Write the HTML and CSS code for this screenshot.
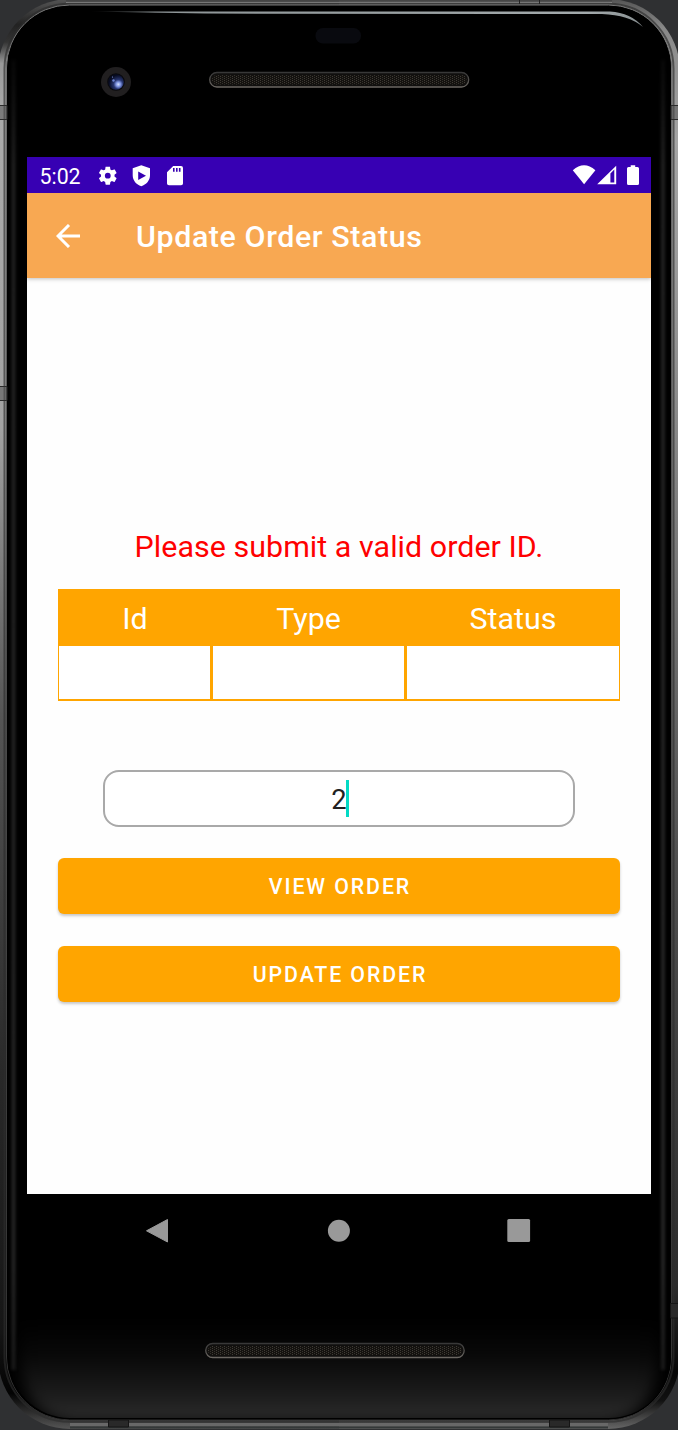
FILE: index.html
```html
<!DOCTYPE html>
<html lang="en">
<head>
<meta charset="utf-8">
<title>Update Order Status</title>
<link rel="stylesheet" href="styles.css">
</head>
<body>
<div class="phone">
  <svg class="shell" viewBox="0 0 678 1430" aria-hidden="true">
    <defs>
      <linearGradient id="rimL" x1="0" y1="0" x2="0" y2="1">
        <stop offset="0" stop-color="#555"/><stop offset=".018" stop-color="#222"/><stop offset=".03" stop-color="#333"/><stop offset=".045" stop-color="#999"/>
        <stop offset=".08" stop-color="#aaa"/><stop offset=".3" stop-color="#a2a2a2"/>
        <stop offset=".5" stop-color="#555"/><stop offset=".75" stop-color="#292929"/>
        <stop offset=".93" stop-color="#161616"/><stop offset=".975" stop-color="#030303"/><stop offset=".99" stop-color="#333"/><stop offset="1" stop-color="#555"/>
      </linearGradient>
      <linearGradient id="rimR" x1="0" y1="0" x2="0" y2="1">
        <stop offset="0" stop-color="#555"/><stop offset=".02" stop-color="#888"/>
        <stop offset=".1" stop-color="#a5a5a5"/><stop offset=".2" stop-color="#999"/>
        <stop offset=".4" stop-color="#777"/><stop offset=".6" stop-color="#505050"/>
        <stop offset=".9" stop-color="#2b2b2b"/><stop offset=".96" stop-color="#060606"/><stop offset=".98" stop-color="#111"/><stop offset="1" stop-color="#666"/>
      </linearGradient>
      <linearGradient id="edge" x1="0" y1="0" x2="0" y2="1">
        <stop offset="0" stop-color="#777"/><stop offset=".3" stop-color="#555"/><stop offset="1" stop-color="#303030"/>
      </linearGradient>
      <linearGradient id="chin" x1="0" y1="0" x2="0" y2="1">
        <stop offset="0" stop-color="#000"/><stop offset=".35" stop-color="#080808"/><stop offset=".8" stop-color="#1f1f1f"/><stop offset="1" stop-color="#303030"/>
      </linearGradient>
      <linearGradient id="side" gradientUnits="userSpaceOnUse" x1="0" y1="30" x2="0" y2="1400">
        <stop offset="0" stop-color="#000"/><stop offset=".1" stop-color="#202020"/><stop offset=".9" stop-color="#242424"/><stop offset="1" stop-color="#161616"/>
      </linearGradient>
      <linearGradient id="shine" x1="0" y1="0" x2="1" y2="0">
        <stop offset="0" stop-color="#8d9496" stop-opacity="0"/><stop offset=".12" stop-color="#8d9496"/>
        <stop offset=".9" stop-color="#a3aaac"/><stop offset="1" stop-color="#899092"/>
      </linearGradient>
      <linearGradient id="slotEdge" x1="0" y1="0" x2="0" y2="1">
        <stop offset="0" stop-color="#383838"/><stop offset="1" stop-color="#6b6762"/>
      </linearGradient>
      <radialGradient id="lens" cx=".65" cy=".65" r=".6">
        <stop offset="0" stop-color="#d4e2ff"/><stop offset=".25" stop-color="#7e93e0"/>
        <stop offset=".5" stop-color="#27356f"/><stop offset="1" stop-color="#070b20"/>
      </radialGradient>
      <pattern id="mesh" width="4" height="2" patternUnits="userSpaceOnUse">
        <rect width="4" height="2" fill="#14120f"/>
        <rect width="1" height="1" fill="#403c36"/><rect x="2" y="1" width="1" height="1" fill="#35322d"/>
      </pattern>
      <filter id="soft" color-interpolation-filters="sRGB" filterUnits="userSpaceOnUse" x="0" y="0" width="678" height="1430"><feGaussianBlur stdDeviation="1.500"/></filter>
      <filter id="wide" color-interpolation-filters="sRGB" filterUnits="userSpaceOnUse" x="-30" y="1250" width="740" height="220"><feGaussianBlur stdDeviation="7"/></filter>
      <clipPath id="glassClip"><rect x="8" y="6" width="663" height="1412" rx="62"/></clipPath>
      <clipPath id="halfL"><rect width="339" height="1430"/></clipPath>
      <clipPath id="halfR"><rect x="339" width="339" height="1430"/></clipPath>
    </defs>
    <rect width="678" height="1430" fill="#2f3032"/>
    <rect x="-2" y="-1" width="682" height="1430" rx="72" fill="url(#rimL)" clip-path="url(#halfL)"/>
    <rect x="-2" y="-1" width="682" height="1430" rx="72" fill="url(#rimR)" clip-path="url(#halfR)"/>
    <path d="M66 .8H612" stroke="#404040"/>
    <path d="M66 2.500H612" stroke="#858585"/>
    <path d="M70 1424.500H608" stroke="#686868" stroke-width="3"/>
    <path d="M70 1427.500H608" stroke="#343838" stroke-width="2"/>
    <rect x="4.500" y="3.800" width="669" height="1418" rx="65" fill="none" stroke="#2c2c2c" stroke-opacity=".65" stroke-width="2"/>
    <rect x="6.500" y="5" width="665" height="1415" rx="63" fill="#000" stroke="url(#edge)"/>
    <rect x="7.500" y="6" width="663.500" height="1413" rx="62" fill="#000"/>
    <g clip-path="url(#glassClip)">
      <path d="M20 1320H658V1360Q654 1422 600 1422H78Q24 1422 20 1360Z" fill="url(#chin)" filter="url(#wide)"/>
      <path d="M13.500 60V1370M663 60V1370" stroke="url(#side)" stroke-width="4" filter="url(#soft)"/>
    </g>
    <path d="M88 11.400H610Q631 12.500 643 27Q629 15 602 14L205 13.600Z" fill="url(#shine)"/>
    <g fill="#555" fill-opacity=".55" stroke="#2b2b2b">
      <path d="M-1 105.500H7V119.500H-1ZM671 105.500H679V119.500H671Z"/>
      <path d="M-1 386.500H7V400.500H-1Z"/>
    </g>
    <g fill="#292929" stroke="#151515">
      <path d="M108.500 1420V1427H128.500V1420ZM549.500 1420V1427H569.500V1420ZM670.500 1303.500H679V1318H670.500Z"/>
    </g>
    <path d="M519.500 0V4M539.500 0V4" stroke="#222"/>
    <rect x="315.500" y="28" width="45.500" height="15.500" rx="7.500" fill="#090a0f"/>
    <circle cx="116" cy="82" r="15" fill="#211f20"/>
    <circle cx="116" cy="82" r="8.800" fill="#09090c"/>
    <circle cx="116" cy="82" r="7.800" fill="url(#lens)"/>
    <circle cx="113.500" cy="80.500" r="1.200" fill="#6b82cf"/>
    <circle cx="112.500" cy="77" r=".6" fill="#8ba0e8"/>
    <rect x="209.700" y="72.500" width="259" height="14.500" rx="7.200" fill="#100f0e" stroke="url(#slotEdge)" stroke-width="1.300"/>
    <rect x="212" y="75" width="254.500" height="9.500" rx="4.700" fill="url(#mesh)"/>
    <rect x="205.700" y="1343.500" width="258.500" height="14" rx="7" fill="#100f0e" stroke="url(#slotEdge)" stroke-width="1.300"/>
    <rect x="208" y="1346" width="254" height="9" rx="4.500" fill="url(#mesh)"/>
  </svg>

  <main class="screen">
    <div class="status-bar">
      <span class="clock">5:02</span>
      <svg class="notices" viewBox="0 0 90 24" fill="#fff" aria-hidden="true">
        <path transform="translate(-1.500 .4) scale(.94)" fill-rule="evenodd" d="M19.140 12.940c.04-.3.060-.61.060-.94 0-.32-.02-.64-.07-.94l2.030-1.580c.18-.14.230-.41.120-.61l-1.920-3.320c-.12-.22-.37-.29-.59-.22l-2.390.96c-.5-.38-1.030-.7-1.620-.94l-.36-2.540c-.04-.24-.24-.41-.48-.41h-3.840c-.24 0-.43.17-.47.41l-.36 2.540c-.59.24-1.130.57-1.620.94l-2.390-.96c-.22-.08-.47 0-.59.220L2.740 8.870c-.12.210-.08.470.120.610l2.030 1.580c-.05.3-.09.630-.09.940s.02.640.070.940l-2.030 1.580c-.18.140-.23.410-.12.610l1.920 3.320c.12.220.37.290.59.220l2.390-.96c.5.380 1.030.7 1.620.940l.36 2.540c.05.240.240.410.480.410h3.840c.24 0 .44-.17.470-.41l.36-2.540c.59-.24 1.130-.56 1.620-.94l2.390.96c.22.080.470 0 .59-.22l1.920-3.320c.12-.22.070-.47-.12-.61zM12 15.100a3.100 3.100 0 1 1 0-6.200 3.100 3.100 0 0 1 0 6.200z"/>
        <path fill-rule="evenodd" d="M43.300 1.200 52 4.300V11.300C52 16.500 48.200 20.800 43.300 22.200 38.400 20.800 34.700 16.500 34.700 11.300V4.300ZM40.200 7.400V16L48 11.700Z"/>
        <path fill-rule="evenodd" d="M75.200 2H83Q85 2 85 4V19.500Q85 21.300 83 21.300H71Q69 21.300 69 19.500V8.200ZM75 4V7.800H76.600V4ZM78 4V7.800H79.600V4ZM80.900 4V7.800H82.500V4Z"/>
      </svg>
      <svg class="signals" viewBox="0 0 68 24" fill="#fff" aria-hidden="true">
        <path d="M.8 6.200Q12-3.800 23.400 6.200L12.100 20.300Z"/>
        <path fill-rule="evenodd" d="M25.200 20.300 44.200 1.700V20.300ZM38.400 9.500V18.400H42.300V5.600Z"/>
        <path d="M58.700 1.200H63.200V3H65.500Q67 3 67 4.500V19.500Q67 21 65.500 21H56.500Q55 21 55 19.500V4.500Q55 3 56.500 3H58.700Z"/>
      </svg>
    </div>
    <header class="app-bar">
      <svg class="back" viewBox="0 0 24 24" fill="none" stroke="#fff" stroke-width="3" aria-label="Back"><path d="M24 12H2.500M13 1 2 12 13 23"/></svg>
      <h1 class="title">Update Order Status</h1>
    </header>
    <section class="content">
      <p class="error">Please submit a valid order ID.</p>
      <div class="table">
        <div class="head">Id</div><div class="head">Type</div><div class="head">Status</div>
        <div class="cell"></div><div class="cell"></div><div class="cell"></div>
      </div>
      <div class="field"><span>2</span><i class="caret"></i></div>
      <button class="action">VIEW ORDER</button>
      <button class="action">UPDATE ORDER</button>
    </section>
  </main>

  <nav class="nav-bar">
    <svg viewBox="0 0 24 26" fill="#999"><path d="M22.500 1.500V24L1.500 12.800Z" stroke="#999" stroke-linejoin="round"/></svg>
    <svg viewBox="0 0 24 26" fill="#999"><circle cx="12.900" cy="12.700" r="11"/></svg>
    <svg viewBox="0 0 24 26" fill="#999"><rect x=".3" y="1" width="22.800" height="23" rx="1.500"/></svg>
  </nav>
</div>
</body>
</html>
```
FILE: styles.css
```css
* { box-sizing: border-box; }
body { margin: 0; background: #2f3032; font-family: Roboto, sans-serif; }
.phone {
  position: relative;
  width: 678px;
  height: 1430px;
  padding: 157px 27px 0;
  overflow: hidden;
}
.shell { position: absolute; inset: 0; width: 678px; height: 1430px; z-index: -1; }
.screen { height: 1037px; background: #fefefe; display: flex; flex-direction: column; }

.status-bar {
  height: 36px;
  padding: 0 11px 0 12.500px;
  display: flex;
  align-items: center;
  background: #3700b3;
  color: #fff;
}
.clock { width: 58px; font-size: 21.300px; line-height: 34px; padding-top: 3px; }
.notices { width: 90px; height: 24px; margin-top: 2px; }
.signals { width: 68px; height: 24px; margin: 2px 0 0 auto; }

.app-bar {
  height: 85px;
  padding-left: 29px;
  display: flex;
  align-items: center;
  gap: 56px;
  background: #f8a852;
  color: #fff;
  box-shadow: 0 1px 4px rgba(0, 0, 0, .25);
  clip-path: inset(0 0 -8px 0);
}
.back { width: 24px; height: 24px; }
.title { margin: 1px 0 0; font-size: 30.400px; font-weight: 500; letter-spacing: .6px; }

.content { padding: 251px 31px 0; display: flex; flex-direction: column; }
.error {
  margin: 0 0 24px;
  height: 36px;
  line-height: 36px;
  text-align: center;
  font-size: 30.400px;
  letter-spacing: .05px;
  color: #f00;
}
.table {
  display: grid;
  grid-template-columns: 153px 194px 1fr;
  grid-template-rows: 56px 56px;
  background: #ffa500;
}
.head { display: flex; align-items: center; justify-content: center; padding: 2px 0 0 1px; font-size: 30.400px; color: #fff; }
.cell { margin: 1px 1px 2px 2px; background: #fff; }
.cell:nth-child(4) { margin-left: 1px; }
.field {
  height: 57px;
  margin: 69px 45px 31px;
  display: flex;
  align-items: center;
  justify-content: center;
  border: 2px solid #a9a9a9;
  border-radius: 16px;
  background: #fff;
  font-size: 27.300px;
  color: #212121;
}
.field span { padding-top: 2px; }
.caret { width: 3px; height: 37px; margin: 0 -2px 0 -1px; background: #03dac5; }
.action {
  height: 56px;
  margin: 0 0 32px;
  padding: 2px 0 0 2px;
  border: 0;
  border-radius: 6px;
  background: #ffa500;
  box-shadow: 0 2px 3px rgba(0, 0, 0, .22);
  color: #fff;
  font: 500 21.300px/1 Roboto, sans-serif;
  letter-spacing: 1.900px;
}
.nav-bar {
  height: 74px;
  padding: 0 120px 0 118px;
  display: flex;
  align-items: center;
  justify-content: space-between;
}
.nav-bar svg { width: 24px; height: 26px; }
```
